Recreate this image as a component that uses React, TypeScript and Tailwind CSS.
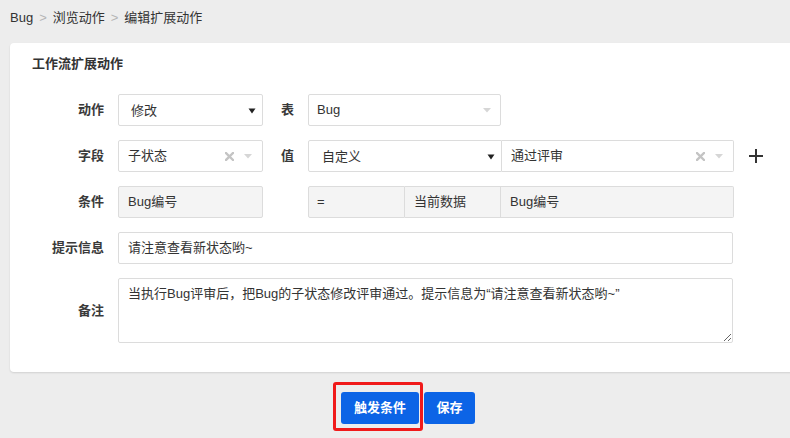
import React from "react";

const font = "font-['Liberation_Sans','Noto_Sans_CJK_SC',sans-serif]";

function NativeArrow() {
  return (
    <svg width="8" height="6" viewBox="0 0 8 6" className="shrink-0">
      <path d="M0.5 0.5 H7.5 L4 5.5 Z" fill="#222" />
    </svg>
  );
}

function ChosenTail() {
  return (
    <div className="flex items-center gap-[10px] shrink-0">
      <svg width="9" height="9" viewBox="0 0 9 9">
        <path d="M1 1 L8 8 M8 1 L1 8" stroke="#c4c4c4" strokeWidth="2.4" strokeLinecap="square" />
      </svg>
      <svg width="8" height="5" viewBox="0 0 8 5">
        <path d="M0 0 H8 L4 4.5 Z" fill="#d6d6d6" />
      </svg>
    </div>
  );
}

function Label({ children, w = "w-[108px]" }: { children: React.ReactNode; w?: string }) {
  return (
    <div className={`${w} shrink-0 pr-[14px] text-right text-[13px] font-bold text-[#3a3a3a]`}>
      {children}
    </div>
  );
}

export default function App() {
  return (
    <div className={`${font} w-[790px] h-[438px] overflow-hidden bg-[#ededed] text-[13px] text-[#333]`}>
      {/* breadcrumb */}
      <div className="h-[43px] pl-[10px] pt-[8px] flex items-start gap-[6px] leading-[20px] text-[13px] text-[#333]">
        <span>Bug</span>
        <span className="text-[#b5b5b5]">&gt;</span>
        <span>浏览动作</span>
        <span className="text-[#b5b5b5]">&gt;</span>
        <span>编辑扩展动作</span>
      </div>

      {/* form card */}
      <div className="ml-[10px] w-[800px] rounded-[4px] bg-white shadow-[0_1px_2px_rgba(0,0,0,0.12)] pt-[11px] pb-[29px]">
        <div className="pl-[22px] h-[20px] leading-[20px] text-[13px] font-bold text-[#333]">工作流扩展动作</div>

        <div className="mt-[20px] flex flex-col gap-[14px]">
          {/* 动作 / 表 */}
          <div className="flex items-center h-[32px]">
            <Label>动作</Label>
            <div className="w-[145px] h-[32px] border border-[#dcdcdc] rounded-[2px] flex items-center pl-[12px] pr-[6px] pt-[2px]">
              <span className="flex-1">修改</span>
              <NativeArrow />
            </div>
            <Label w="w-[45px]">表</Label>
            <div className="w-[193px] h-[32px] border border-[#dcdcdc] rounded-[2px] flex items-center pl-[8px] pr-[9px]">
              <span className="flex-1">Bug</span>
              <svg width="8" height="5" viewBox="0 0 8 5">
                <path d="M0 0 H8 L4 4.5 Z" fill="#d6d6d6" />
              </svg>
            </div>
          </div>

          {/* 字段 / 值 */}
          <div className="flex items-center h-[32px]">
            <Label>字段</Label>
            <div className="w-[145px] h-[32px] border border-[#dcdcdc] rounded-[2px] flex items-center pl-[9px] pr-[10px]">
              <span className="flex-1">子状态</span>
              <ChosenTail />
            </div>
            <Label w="w-[45px]">值</Label>
            <div className="flex h-[32px]">
              <div className="w-[194px] h-[32px] border border-[#dcdcdc] rounded-l-[2px] flex items-center pl-[13px] pr-[6px] pt-[2px]">
                <span className="flex-1">自定义</span>
                <NativeArrow />
              </div>
              <div className="w-[232px] h-[32px] border border-l-0 border-[#dcdcdc] rounded-r-[2px] flex items-center pl-[9px] pr-[10px]">
                <span className="flex-1">通过评审</span>
                <ChosenTail />
              </div>
            </div>
            <div className="ml-[15px] w-[14px] h-[14px] relative">
              <div className="absolute left-0 top-[6px] w-[14px] h-[1.5px] bg-[#333]" />
              <div className="absolute top-0 left-[6px] h-[14px] w-[1.5px] bg-[#333]" />
            </div>
          </div>

          {/* 条件 */}
          <div className="flex items-center h-[32px]">
            <Label>条件</Label>
            <div className="w-[145px] h-[32px] border border-[#dcdcdc] rounded-[2px] bg-[#f4f4f4] flex items-center pl-[9px]">
              Bug编号
            </div>
            <div className="w-[45px] shrink-0" />
            <div className="flex h-[32px]">
              <div className="w-[97px] h-[32px] border border-[#dcdcdc] rounded-l-[2px] bg-[#f4f4f4] flex items-center pl-[8px]">=</div>
              <div className="w-[96px] h-[32px] border border-l-0 border-[#dcdcdc] bg-[#f4f4f4] flex items-center pl-[9px]">当前数据</div>
              <div className="w-[233px] h-[32px] border border-l-0 border-[#dcdcdc] rounded-r-[2px] bg-[#f4f4f4] flex items-center pl-[9px]">Bug编号</div>
            </div>
          </div>

          {/* 提示信息 */}
          <div className="flex items-center h-[32px]">
            <Label>提示信息</Label>
            <div className="w-[615px] h-[32px] border border-[#dcdcdc] rounded-[2px] flex items-center pl-[9px]">
              请注意查看新状态哟~
            </div>
          </div>

          {/* 备注 */}
          <div className="flex items-center h-[65px]">
            <Label>备注</Label>
            <textarea
              readOnly
              defaultValue={"当执行Bug评审后，把Bug的子状态修改评审通过。提示信息为\u201C请注意查看新状态哟~\u201D"}
              className="w-[615px] h-[65px] border border-[#dcdcdc] rounded-[2px] pl-[9px] pt-[5px] text-[13px] leading-[20px] text-[#333] outline-none"
            />
          </div>
        </div>
      </div>

      {/* actions */}
      <div className="pt-[20px] pl-[341px] flex gap-[5px]">
        <div className="relative">
          <div className="absolute left-[-8px] top-[-10px] w-[90px] h-[49px] border-[3px] border-[#f01a1a] rounded-[3px]" />
          <button className="relative w-[78px] h-[32px] rounded-[3px] bg-[#0c64e6] text-white text-[13px] font-bold">触发条件</button>
        </div>
        <button className="w-[51px] h-[32px] rounded-[3px] bg-[#0c64e6] text-white text-[13px] font-bold">保存</button>
      </div>
    </div>
  );
}
